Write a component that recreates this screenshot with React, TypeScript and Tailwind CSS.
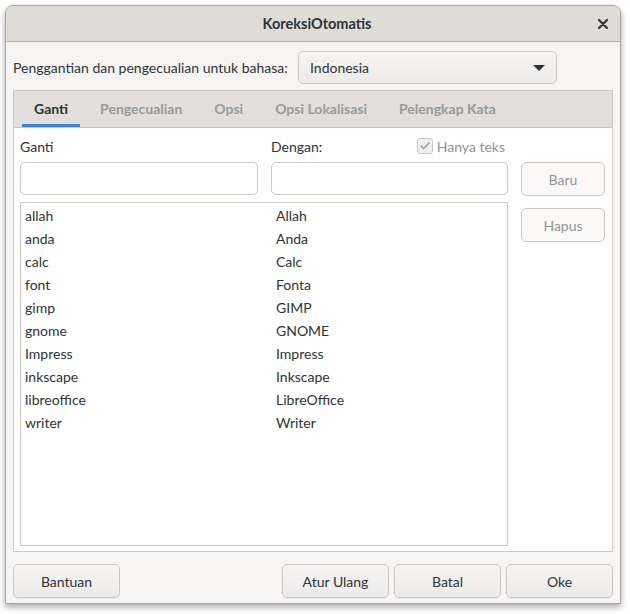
import { Check } from 'lucide-react';

const rows: [string, string][] = [
	['allah', 'Allah'],
	['anda', 'Anda'],
	['calc', 'Calc'],
	['font', 'Fonta'],
	['gimp', 'GIMP'],
	['gnome', 'GNOME'],
	['Impress', 'Impress'],
	['inkscape', 'Inkscape'],
	['libreoffice', 'LibreOffice'],
	['writer', 'Writer'],
];

const tabs = ['Ganti', 'Pengecualian', 'Opsi', 'Opsi Lokalisasi', 'Pelengkap Kata'];

function DlgButton({ label, disabled, className = '' }: { label: string; disabled?: boolean; className?: string }) {
	return (
		<button
			className={`h-[34px] rounded-[5px] border border-[#cdc7c2] text-[14px] ${
				disabled
					? 'bg-[#faf9f8] text-[#929595]'
					: 'bg-gradient-to-b from-[#f6f5f4] to-[#edebe9] text-[#2e3436] shadow-[0_1px_0_rgba(0,0,0,0.05)]'
			} ${className}`}
		>
			{label}
		</button>
	);
}

export default function App() {
	return (
		<div
			className="w-[630px] h-[614px] bg-white pt-[5px] pl-[5px] overflow-hidden"
			style={{ fontFamily: 'Lato, "Noto Sans", sans-serif' }}
		>
			<div className="w-[616px] h-[599px] rounded-t-[8px] bg-[#f6f5f4] border border-[#a9a6a2] shadow-[0_3px_6px_rgba(0,0,0,0.35)] flex flex-col overflow-hidden">
				{/* titlebar */}
				<div className="relative h-[36px] shrink-0 bg-[#dfdcd8] border-b border-[#b6b1ab] flex items-center justify-center">
					<span className="text-[14.5px] font-bold text-[#2e3436] ml-[8px]">KoreksiOtomatis</span>
					<svg className="absolute right-[12px] top-[13px]" width="10" height="10" viewBox="0 0 10 10">
						<path d="M1 1 L9 9 M9 1 L1 9" stroke="#2e3436" strokeWidth="2.2" strokeLinecap="round" />
					</svg>
				</div>

				<div className="flex-1 flex flex-col px-[7px] pt-[9px] pb-[7px] text-[14px] text-[#2e3436]">
					{/* language row */}
					<div className="flex items-center h-[33px]">
						<span className="w-[285px] shrink-0 whitespace-nowrap">Penggantian dan pengecualian untuk bahasa:</span>
						<div className="w-[259px] h-[33px] rounded-[5px] border border-[#cdc7c2] bg-gradient-to-b from-[#f6f5f4] to-[#edebe9] flex items-center justify-between pl-[11px] pr-[11px]">
							<span>Indonesia</span>
							<svg width="12" height="6" viewBox="0 0 12 6">
								<path d="M0 0 L12 0 L6 6 Z" fill="#2e3436" />
							</svg>
						</div>
					</div>

					{/* notebook */}
					<div className="mt-[6px] w-[600px] h-[462px] border border-[#cdc7c2] flex flex-col">
						<div className="h-[37px] shrink-0 bg-[#e1dedb] border-b border-[#cdc7c2] flex pl-[8px] gap-[8px]">
							{tabs.map((t, i) => (
								<div
									key={t}
									className={`px-[12px] h-full flex items-center font-bold text-[14px] border-b-[3px] ${
										i === 0 ? 'text-[#2e3436] border-[#3584e4]' : 'text-[#989b9b] border-transparent'
									}`}
								>
									<span className="mt-[2px]">{t}</span>
								</div>
							))}
						</div>

						<div className="flex-1 bg-white pl-[6px] pr-[6px] pt-[9px] pb-[5px] grid grid-cols-[238px_237px_84px] grid-rows-[18px_33px_1fr] gap-x-[13px] gap-y-[7px]">
							<div className="flex items-center">Ganti</div>
							<div className="flex items-center justify-between pr-[3px]">
								<span>Dengan:</span>
								<span className="flex items-center gap-[4px] text-[#929595]">
									<span className="w-[16px] h-[16px] rounded-[3px] border border-[#cdc7c2] bg-[#f1efed] flex items-center justify-center">
										<Check size={12} strokeWidth={3.5} color="#a4a4a4" />
									</span>
									<span>Hanya teks</span>
								</span>
							</div>
							<div />

							<div className="rounded-[5px] border border-[#cdc7c2] bg-white" />
							<div className="rounded-[5px] border border-[#cdc7c2] bg-white" />
							<DlgButton label="Baru" disabled />

							<div className="col-span-2 border border-[#cdc7c2] bg-white pt-px">
								{rows.map(([a, b]) => (
									<div key={a} className="grid grid-cols-[251px_1fr] h-[23px] items-center pl-[4px]">
										<span>{a}</span>
										<span>{b}</span>
									</div>
								))}
							</div>
							<div className="pt-[6px]">
								<DlgButton label="Hapus" disabled className="w-full" />
							</div>
						</div>
					</div>

					{/* bottom buttons */}
					<div className="mt-[12px] flex">
						<DlgButton label="Bantuan" className="w-[107px]" />
						<div className="flex-1" />
						<div className="flex gap-[5px]">
							<DlgButton label="Atur Ulang" className="w-[107px]" />
							<DlgButton label="Batal" className="w-[107px]" />
							<DlgButton label="Oke" className="w-[107px]" />
						</div>
					</div>
				</div>
			</div>
		</div>
	);
}
